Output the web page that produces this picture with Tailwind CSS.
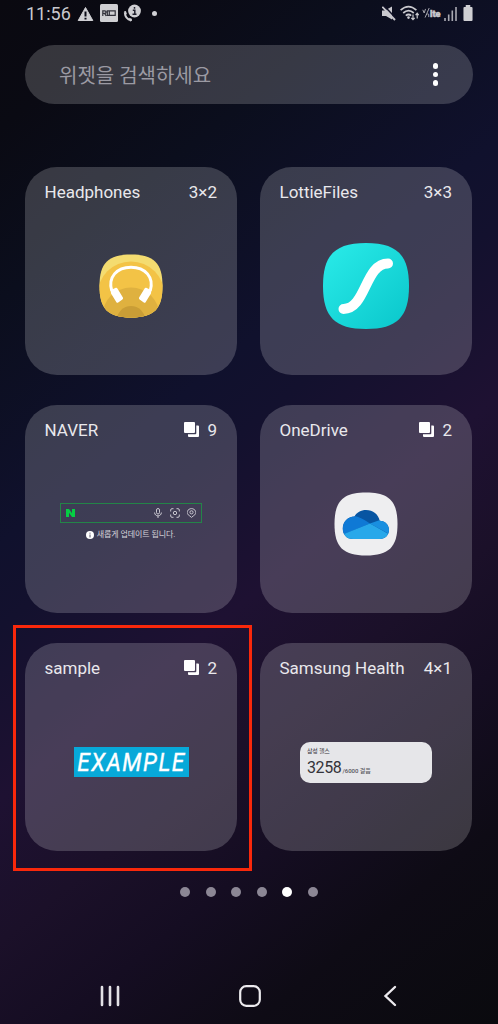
<!DOCTYPE html>
<html lang="ko">
<head>
<meta charset="utf-8">
<title>Widgets</title>
<script src="https://cdn.jsdelivr.net/npm/@tailwindcss/browser@4"></script>
</head>
<body class="w-[498px] h-[1024px] overflow-hidden font-['Roboto','Noto_Sans_CJK_KR',sans-serif] text-[#e9e8ec]">
<div class="relative w-[498px] h-[1024px] flex flex-col bg-[linear-gradient(141deg,#0a0910_0%,#0a0a13_9%,#0b0e1d_21%,#10112d_38%,#13112e_44%,#1e1132_56%,#1b1029_66%,#150d22_75%,#0e0b15_86%,#0a0a0e_100%)]">
  <!-- status bar -->
  <header class="h-[45px] pt-[3px] pl-[26px] pr-[25px] flex items-start justify-between text-[#c9c9ce]">
    <div class="flex items-center h-[22px]">
      <span class="text-[18px] leading-[22px] w-[46px] whitespace-nowrap">11:56</span>
      <svg class="ml-[5px]" width="17" height="16" viewBox="0 0 17 16"><path d="M8.500 1.500L15.800 14.500H1.200Z" fill="#d0d0d4" stroke="#d0d0d4" stroke-linejoin="round"/><path d="M8.500 5.500v5M8.500 11.800v1.800" stroke="#0a0b16" stroke-width="2"/></svg>
      <svg class="ml-[6px] -mt-[2px]" width="18" height="18" viewBox="0 0 18 18"><rect width="18" height="18" rx="1.500" fill="#cfcfd3"/><path d="M2.800 12V6.800h2q1.200 0 1.200 1.300T4.800 9.400h-2M4.600 9.400L6.200 12M8.700 6.800H7.300v4.500h1.400M9.300 6.800h5.900v4.500H9.300z" fill="none" stroke="#30303a" stroke-width="1.200"/></svg>
      <svg class="ml-[5px] -mt-[2px]" width="19" height="18" viewBox="0 0 19 18"><path d="M1.800 8.500C2 12.500 4.500 15.500 8.200 16.300" fill="none" stroke="#cfcfd3" stroke-width="2"/><path d="M.9 7.500l2-.4 1 3-1.500 1zM6 13.800l2.800 1 .2 2-2 .7z" fill="#cfcfd3"/><circle cx="11.500" cy="7" r="6.400" fill="#cfcfd3"/><path d="M11.500 3v1.700M9.800 6.300h2v4M9.500 10.300h4" fill="none" stroke="#20202c" stroke-width="1.500"/></svg>
      <span class="ml-[10px] -mt-[2px] size-[5px] rounded-full bg-[#d0d0d4]"></span>
    </div>
    <div class="flex items-center h-[20px]">
      <svg width="14" height="15" viewBox="0 0 14 15"><path d="M0 4.500h3L10 .5v13L4 10H0z" fill="#c9c9ce"/><path d="M1.800-.5L15 13.500" stroke="#101126" stroke-width="1.500"/><path d="M.3.800L13 14" stroke="#c9c9ce" stroke-width="1.900"/></svg>
      <svg class="ml-[4px]" width="19" height="16" viewBox="0 0 19 16"><g fill="none" stroke="#c9c9ce" stroke-width="1.700"><path d="M.6 5.200Q8.500-2 16.400 5.200M3.200 8Q8.500 3.200 13.800 8M5.800 10.700Q8.500 8.300 11.200 10.700"/><path d="M13 9.500v5M11.300 12.800l1.700 1.900 1.700-1.900M17.200 13.500v-5M15.600 10.200l1.600-1.900 1.600 1.900" stroke-width="1.200"/></g><circle cx="8.500" cy="12.600" r="1.300" fill="#c9c9ce"/></svg>
      <span class="ml-[3px] w-[20px] flex items-center whitespace-nowrap"><svg class="shrink-0" width="8" height="10" viewBox="0 0 8 11" fill="none" stroke="#b4b4bb"><path d="M.5 2L2 5.500 3.500 1M7.500 0L3 10.500M4.500 7.500q1-2 2.500-.5v3"/></svg><b class="text-[9px] leading-[12px] mt-[1px] font-black [-webkit-text-stroke:0.500px_#c9c9ce]">lte</b></span>
      <svg class="ml-[2px]" width="13" height="15" viewBox="0 0 13 15"><path d="M1 12v3M4.700 8.500V15M8.300 4.500V15M12 1v14" stroke="#a9a9b2" stroke-width="1.600"/></svg>
      <svg class="ml-[6px]" width="10" height="16" viewBox="0 0 11 16" preserveAspectRatio="none"><path d="M3 0h5v2h1.500q1 0 1 1v12q0 1-1 1h-8q-1 0-1-1V3q0-1 1-1H3z" fill="#cfcfd3"/></svg>
    </div>
  </header>

  <!-- search -->
  <div class="mx-[25px] h-[59px] shrink-0 rounded-full bg-white/18 flex items-center justify-between pl-[34px] pr-[35px]">
    <span class="mt-[2px] text-[20px] leading-[28px] text-[#9b9aa3] whitespace-nowrap">위젯을 검색하세요</span>
    <span class="flex flex-col gap-[3px]"><i class="size-[5.500px] rounded-full bg-white"></i><i class="size-[5.500px] rounded-full bg-white"></i><i class="size-[5.500px] rounded-full bg-white"></i></span>
  </div>

  <!-- widget grid -->
  <main class="mt-[63px] ml-[25px] grid grid-cols-[212px_212px] auto-rows-[208px] gap-x-[23px] gap-y-[30px]">
    <section class="rounded-[32px] bg-white/19 pt-[15px] pb-[5px] flex flex-col">
      <div class="h-[20px] pl-[19.500px] pr-[20px] flex items-center justify-between text-[17px] leading-[20px]"><span>Headphones</span><span>3×2</span></div>
      <div class="flex-1 flex items-center justify-center">
        <svg width="64" height="64" viewBox="0 0 64 64"><defs><clipPath id="hp"><path d="M32 .5C55 .5 63.500 9 63.500 32S55 63.500 32 63.500.5 55 .5 32 9 .5 32 .5"/></clipPath></defs><g clip-path="url(#hp)"><path d="M0 0h64v64H0z" fill="#f4dc70"/><circle cx="32" cy="41" r="33.500" fill="#f3c346"/><circle cx="32" cy="62" r="28.500" fill="#dfb13f"/><circle cx="32" cy="66" r="14" fill="#c99d36"/></g><path d="M12.800 37C8.500 23 18 13.200 32 13.200S55.500 23 51.200 37" fill="none" stroke="#fff" stroke-width="3"/><path d="M12 36l4.800-2.200q1-.4 1.600.6l5.500 9q.6 1.200-.5 2l-4.200 3.200q-1 .7-1.800-.4l-5.500-9zM52 36l-4.800-2.200q-1-.4-1.600.6l-5.500 9q-.6 1.200.5 2l4.200 3.200q1 .7 1.800-.4l5.500-9z" fill="#fff"/></svg>
      </div>
    </section>
    <section class="rounded-[32px] bg-white/19 pt-[15px] pb-[5px] flex flex-col">
      <div class="h-[20px] pl-[19.500px] pr-[20px] flex items-center justify-between text-[17px] leading-[20px]"><span>LottieFiles</span><span>3×3</span></div>
      <div class="flex-1 flex items-center justify-center">
        <svg width="86" height="86" viewBox="0 0 86 86"><defs><linearGradient id="lf" x1="0" y1="0" x2="1" y2="1"><stop offset=".1" stop-color="#27e8e6"/><stop offset=".9" stop-color="#0dcace"/></linearGradient></defs><path d="M43 0C74 0 86 12 86 43S74 86 43 86 0 74 0 43 12 0 43 0" fill="url(#lf)"/><path d="M20.500 66C43 66 42 20.500 65 20.500" fill="none" stroke="#fff" stroke-width="10" stroke-linecap="round"/></svg>
      </div>
    </section>
    <section class="rounded-[32px] bg-white/19 pt-[15px] pb-[5px] flex flex-col">
      <div class="h-[20px] pl-[19.500px] pr-[20px] flex items-center justify-between text-[17px] leading-[20px]"><span>NAVER</span><span class="flex items-center gap-[8px]"><svg class="-mt-[2px]" width="15" height="15" viewBox="0 0 15 15"><rect width="11" height="11" rx="1" fill="#fff"/><path d="M12.300 3.500H14q1 0 1 1V14q0 1-1 1H5q-1 0-1-1v-1.700h7.300q1 0 1-1z" fill="#fff"/></svg>9</span></div>
      <div class="flex-1 flex flex-col items-center pt-[63px]">
        <div class="w-[142px] h-[20px] border border-[#238548] flex items-center pl-[5px] pr-[5px]">
          <svg width="9" height="8" viewBox="0 0 9 8"><path d="M0 0h3l3 4.200V0h3v8H6L3 3.800V8H0z" fill="#05cf43"/></svg>
          <svg class="ml-auto" width="8" height="10" viewBox="0 0 8 10" fill="none" stroke="#c8c6cf"><rect x="2.500" y=".5" width="3" height="5.500" rx="1.500"/><path d="M.6 4.500C.6 9 7.400 9 7.400 4.500M4 8v2"/></svg>
          <svg class="ml-[8px]" width="10" height="10" viewBox="0 0 10 10" fill="none" stroke="#c8c6cf"><path d="M.7 3.500V2Q.7.700 2 .7h1.500M6.500.7H8Q9.300.7 9.300 2v1.500M9.300 6.500V8Q9.300 9.300 8 9.300H6.500M3.500 9.300H2Q.7 9.300.7 8V6.500"/><circle cx="5" cy="5" r="1.700"/></svg>
          <svg class="ml-[7px]" width="9" height="10" viewBox="0 0 9 10" fill="none" stroke="#c8c6cf"><path d="M4.500 9.400L2.800 8C-2.300 5 1 .6 4.500.6S11.300 5 6.200 8z"/><circle cx="4.500" cy="4.300" r="1.600"/></svg>
        </div>
        <div class="mt-[5px] -ml-[1px] h-[13px] flex items-center text-[8px] leading-[13px] text-[#d5d3da] whitespace-nowrap"><svg class="mr-[3px]" width="8" height="8" viewBox="0 0 8 8"><circle cx="4" cy="4" r="4" fill="#fff"/><path d="M4 1.700v1M4 3.500v3" stroke="#555064"/></svg><span class="tracking-[-0.100px]">새롭게 업데이트 됩니다.</span></div>
      </div>
    </section>
    <section class="rounded-[32px] bg-white/19 pt-[15px] pb-[5px] flex flex-col">
      <div class="h-[20px] pl-[19.500px] pr-[20px] flex items-center justify-between text-[17px] leading-[20px]"><span>OneDrive</span><span class="flex items-center gap-[8px]"><svg class="-mt-[2px]" width="15" height="15" viewBox="0 0 15 15"><rect width="11" height="11" rx="1" fill="#fff"/><path d="M12.300 3.500H14q1 0 1 1V14q0 1-1 1H5q-1 0-1-1v-1.700h7.300q1 0 1-1z" fill="#fff"/></svg>2</span></div>
      <div class="flex-1 flex items-center justify-center">
        <svg width="64" height="64" viewBox="0 0 64 64"><defs><clipPath id="od"><path d="M19 47C12 47 8.800 42 8.800 36.500 8.800 29.500 14 24.500 20.500 24.500 22.500 20.500 27 18 32 18 39 18 44.500 22.500 45.700 28.800 51 28.800 55 33 55 38 55 43 51 47 46 47z"/></clipPath></defs><path d="M32 .5C55 .5 63.500 9 63.500 32S55 63.500 32 63.500.5 55 .5 32 9 .5 32 .5" fill="#eeeef0"/><g clip-path="url(#od)"><path d="M0 0h64v64H0z" fill="#0755a2"/><path d="M46 28L36 31.500 64 47V24z" fill="#198fe0"/><path d="M0 24h20.500Q26 24.500 36 31.500L8 43v9H0z" fill="#0f79d5"/><path d="M6 43.500L36 31.500 58 44v6H6z" fill="#28a8ea"/></g></svg>
      </div>
    </section>
    <section class="rounded-[32px] bg-white/19 pt-[15px] pb-[5px] flex flex-col">
      <div class="h-[20px] pl-[19.500px] pr-[20px] flex items-center justify-between text-[17px] leading-[20px]"><span>sample</span><span class="flex items-center gap-[8px]"><svg class="-mt-[2px]" width="15" height="15" viewBox="0 0 15 15"><rect width="11" height="11" rx="1" fill="#fff"/><path d="M12.300 3.500H14q1 0 1 1V14q0 1-1 1H5q-1 0-1-1v-1.700h7.300q1 0 1-1z" fill="#fff"/></svg>2</span></div>
      <div class="flex-1 flex items-center justify-center">
        <div class="w-[115px] h-[30px] bg-[#07a9d9] flex items-center justify-center whitespace-nowrap text-white"><span class="text-[26px] leading-[30px] italic font-normal tracking-[1.800px] scale-x-[0.870] mr-[-1px] [-webkit-text-stroke:0.400px_white]">EXAMPLE</span></div>
      </div>
    </section>
    <section class="rounded-[32px] bg-white/19 pt-[15px] pb-[5px] flex flex-col">
      <div class="h-[20px] pl-[19.500px] pr-[20px] flex items-center justify-between text-[17px] leading-[20px]"><span class="whitespace-nowrap">Samsung Health</span><span>4×1</span></div>
      <div class="flex-1 flex items-center justify-center">
        <div class="w-[132px] h-[41px] rounded-[10px] bg-[#e6e6e9] text-[#34333a] pl-[7px] pt-[4px]">
          <div class="text-[6px] leading-[9px] tracking-[-0.200px]">삼성 헬스</div>
          <div class="mt-[3px] flex items-baseline whitespace-nowrap"><span class="text-[16px] leading-[20px] tracking-[-0.400px]">3258</span><span class="ml-[1px] text-[6px] leading-[9px] font-medium text-[#55545a]">/6000 걸음</span></div>
        </div>
      </div>
    </section>
  </main>

  <!-- page dots -->
  <div class="mt-[35.500px] flex justify-center gap-[15.500px]">
    <i class="size-[10px] rounded-full bg-[#8c8795]"></i><i class="size-[10px] rounded-full bg-[#8c8795]"></i><i class="size-[10px] rounded-full bg-[#8c8795]"></i><i class="size-[10px] rounded-full bg-[#8c8795]"></i><i class="size-[10px] rounded-full bg-white"></i><i class="size-[10px] rounded-full bg-[#8c8795]"></i>
  </div>

  <!-- navigation bar -->
  <nav class="mt-auto mb-[16px] pl-[100px] pr-[101px] flex items-center">
    <svg width="20" height="24" viewBox="0 0 20 24"><path d="M2 3v18M10 3v18M18 3v18" stroke="#e3e1e6" stroke-width="2.600" stroke-linecap="round"/></svg>
    <svg class="ml-[119px]" width="22" height="24" viewBox="0 0 22 24"><rect x="1.200" y="2.200" width="19.600" height="19.600" rx="6" fill="none" stroke="#eceaee" stroke-width="2.200"/></svg>
    <svg class="ml-auto" width="14" height="24" viewBox="0 0 14 24"><path d="M12 3L2.500 12l9.500 9" fill="none" stroke="#eceaee" stroke-width="2.400" stroke-linecap="round"/></svg>
  </nav>

  <!-- highlight frame over the sample widget -->
  <div class="absolute left-[13px] top-[625px] w-[239px] h-[246px] border-[3.500px] border-[#f9280b]"></div>
</div>
</body>
</html>
